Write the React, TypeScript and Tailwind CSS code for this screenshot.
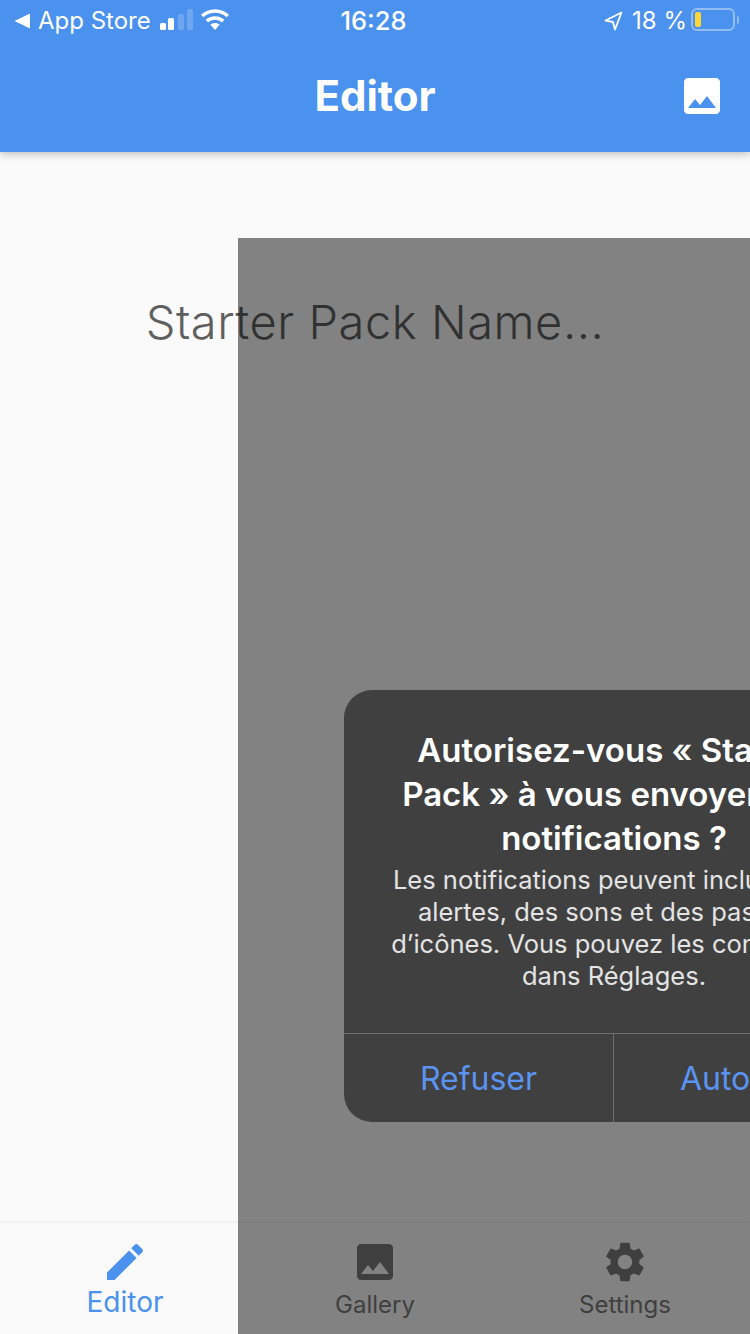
import React from 'react';

const PHOTO =
  'M21 19V5c0-1.1-.9-2-2-2H5c-1.1 0-2 .9-2 2v14c0 1.1.9 2 2 2h14c1.1 0 2-.9 2-2zM8.5 13.5l2.5 3.01L14.5 12l4.5 6H5l3.5-4.5z';
const EDIT =
  'M3 17.25V21h3.75L17.81 9.94l-3.75-3.75L3 17.25zM20.71 7.04c.39-.39.39-1.02 0-1.41l-2.34-2.34c-.39-.39-1.02-.39-1.41 0l-1.83 1.83 3.75 3.75 1.83-1.83z';
const GEAR =
  'M19.14 12.94c.04-.3.06-.61.06-.94 0-.32-.02-.64-.07-.94l2.03-1.58c.18-.14.23-.41.12-.61l-1.92-3.32c-.12-.22-.37-.29-.59-.22l-2.39.96c-.5-.38-1.03-.7-1.62-.94l-.36-2.54c-.04-.24-.24-.41-.48-.41h-3.84c-.24 0-.43.17-.47.41l-.36 2.54c-.59.24-1.13.57-1.62.94l-2.39-.96c-.22-.08-.47 0-.59.22L2.74 8.87c-.12.21-.08.47.12.61l2.03 1.58c-.05.3-.09.63-.09.94s.02.64.07.94l-2.03 1.58c-.18.14-.23.41-.12.61l1.92 3.32c.12.22.37.29.59.22l2.39-.96c.5.38 1.03.7 1.62.94l.36 2.54c.05.24.24.41.48.41h3.84c.24 0 .44-.17.47-.41l.36-2.54c.59-.24 1.13-.56 1.62-.94l2.39.96c.22.08.47 0 .59-.22l1.92-3.32c.12-.22.07-.47-.12-.61l-2.01-1.58zM12 15.6c-1.98 0-3.6-1.62-3.6-3.6s1.62-3.6 3.6-3.6 3.6 1.62 3.6 3.6-1.62 3.6-3.6 3.6z';

const Icon = ({ d, className }: { d: string; className?: string }) => (
  <svg viewBox="0 0 24 24" fill="currentColor" className={className}>
    <path d={d} />
  </svg>
);

const StatusBar = () => (
  <div className="flex items-center h-[42px] pl-[14px] pr-[11px] text-white text-[24px] font-normal">
    {/* Left: back to store, signal, wifi */}
    <div className="flex-1 flex items-center">
      <svg width="16" height="16" viewBox="0 0 16 16" fill="currentColor" className="mr-[8px] -mt-[1px]">
        <path d="M16 0.5V15.5L0.5 8Z" />
      </svg>
      <span className="leading-none">App Store</span>
      <svg width="34" height="22" viewBox="0 0 34 22" className="ml-[8px] -mt-[3px]" fill="currentColor">
        <rect x="1" y="14" width="6" height="7" rx="1.5" />
        <rect x="9" y="9" width="6" height="12" rx="1.5" />
        <rect x="19" y="5" width="6" height="16" rx="1.5" opacity="0.2" />
        <rect x="28" y="0" width="6" height="21" rx="1.5" opacity="0.2" />
      </svg>
      <svg width="30" height="22" viewBox="0 0 30 22" className="ml-[7px] -mt-[3px]" fill="currentColor">
        <path d="M15 0.2C9.5 0.2 4.6 2.4 1 5.8L3.4 8.3C6.4 5.5 10.5 3.8 15 3.8C19.5 3.8 23.6 5.5 26.6 8.3L29 5.8C25.4 2.4 20.5 0.2 15 0.2Z" />
        <path d="M15 7.2C11.4 7.2 8.2 8.6 5.7 10.8L8.1 13.4C10 11.8 12.4 10.8 15 10.8C17.6 10.8 20 11.8 21.9 13.4L24.3 10.8C21.8 8.6 18.6 7.2 15 7.2Z" />
        <path d="M15 14C13.2 14 11.6 14.7 10.4 15.7L15 21L19.6 15.7C18.4 14.7 16.8 14 15 14Z" />
      </svg>
    </div>
    <span className="leading-none font-medium text-[25.5px] -ml-[6px]">16:28</span>
    {/* Right: location, battery */}
    <div className="flex-1 flex items-center justify-end">
      <svg width="19" height="20" viewBox="0 0 19 20" fill="none" stroke="currentColor" strokeWidth="1.8" strokeLinejoin="round" className="-mt-[1px]">
        <path d="M1.5 9.5L17.5 1.5L11 18.5L9 11Z" />
      </svg>
      <span className="ml-[9px] leading-none">18 %</span>
      <div className="ml-[4px] flex items-center -mt-[3px]">
        <div className="w-[44px] h-[23px] rounded-[6px] border-2 border-white/40 p-[2px]">
          <div className="w-[6px] h-full rounded-[2px] bg-[#fdd835]" />
        </div>
        <div className="ml-[2px] w-[2px] h-[8px] rounded-r bg-white/40" />
      </div>
    </div>
  </div>
);

const TabItem = ({
  d,
  label,
  active,
}: {
  d: string;
  label: string;
  active?: boolean;
}) => (
  <div className={`flex-1 flex flex-col items-center pt-[15px] ${active ? 'text-[#4a92ed]' : 'text-[#7a7a7a]'}`}>
    <Icon d={d} className="w-12 h-12 shrink-0" />
    <span className={active ? 'text-[28px] leading-[34px] -mt-[1px]' : 'text-[24px] leading-[30px] mt-[4px]'}>
      {label}
    </span>
  </div>
);

export default function App() {
  return (
    <div className="relative w-[750px] h-[1334px] overflow-hidden flex flex-col bg-[#fafafa] font-['Inter','Liberation_Sans',sans-serif]">
      {/* App bar */}
      <div className="h-[152px] shrink-0 bg-[#4a92ed] shadow-[0_2px_8px_rgba(0,0,0,0.25)] z-10">
        <StatusBar />
        <div className="flex items-center justify-center relative h-[110px] pb-[2px]">
          <span className="text-white text-[42px] font-bold leading-none">Editor</span>
          <Icon d={PHOTO} className="absolute left-[678px] top-[30px] w-12 h-12 text-white" />
        </div>
      </div>

      {/* Content */}
      <div className="flex-1 flex justify-center pt-[140px]">
        <span className="text-[47px] leading-[60px] font-light tracking-[0.55px] text-[#5f5f5f] h-[60px]">Starter Pack Name...</span>
      </div>

      {/* Bottom tabs */}
      <div className="h-[112px] shrink-0 flex bg-[#fafafa] border-t border-[#f0f0f0] shadow-[0_-1px_3px_rgba(0,0,0,0.04)]">
        <TabItem d={EDIT} label="Editor" active />
        <TabItem d={PHOTO} label="Gallery" />
        <TabItem d={GEAR} label="Settings" />
      </div>

      {/* Permission overlay, mid-transition */}
      <div className="absolute left-[238px] top-[238px] w-[750px] h-[1334px] bg-black/[.48] flex items-center justify-center pl-[2px] pt-[2px]">
        <div className="w-[540px] rounded-[28px] bg-[#404040] text-white text-center">
          <div className="pt-[38px] px-[30px] h-[343px]">
            <p className="text-[33px] leading-[44px] font-semibold text-white">
              Autorisez-vous « Starter
              <br />
              Pack » à vous envoyer des
              <br />
              notifications ?
            </p>
            <p className="mt-[4px] text-[25.5px] leading-[32px] text-[#e4e4e4]">
              Les notifications peuvent inclure des
              <br />
              alertes, des sons et des pastilles
              <br />
              d’icônes. Vous pouvez les configurer
              <br />
              dans Réglages.
            </p>
          </div>
          <div className="flex h-[89px] border-t border-[#6e6e6e] text-[32px] text-[#5b93f0]">
            <div className="w-[270px] flex items-center justify-center border-r border-[#6e6e6e] pt-[2px]">Refuser</div>
            <div className="flex-1 flex items-center justify-center pt-[2px]">Autoriser</div>
          </div>
        </div>
      </div>
    </div>
  );
}
